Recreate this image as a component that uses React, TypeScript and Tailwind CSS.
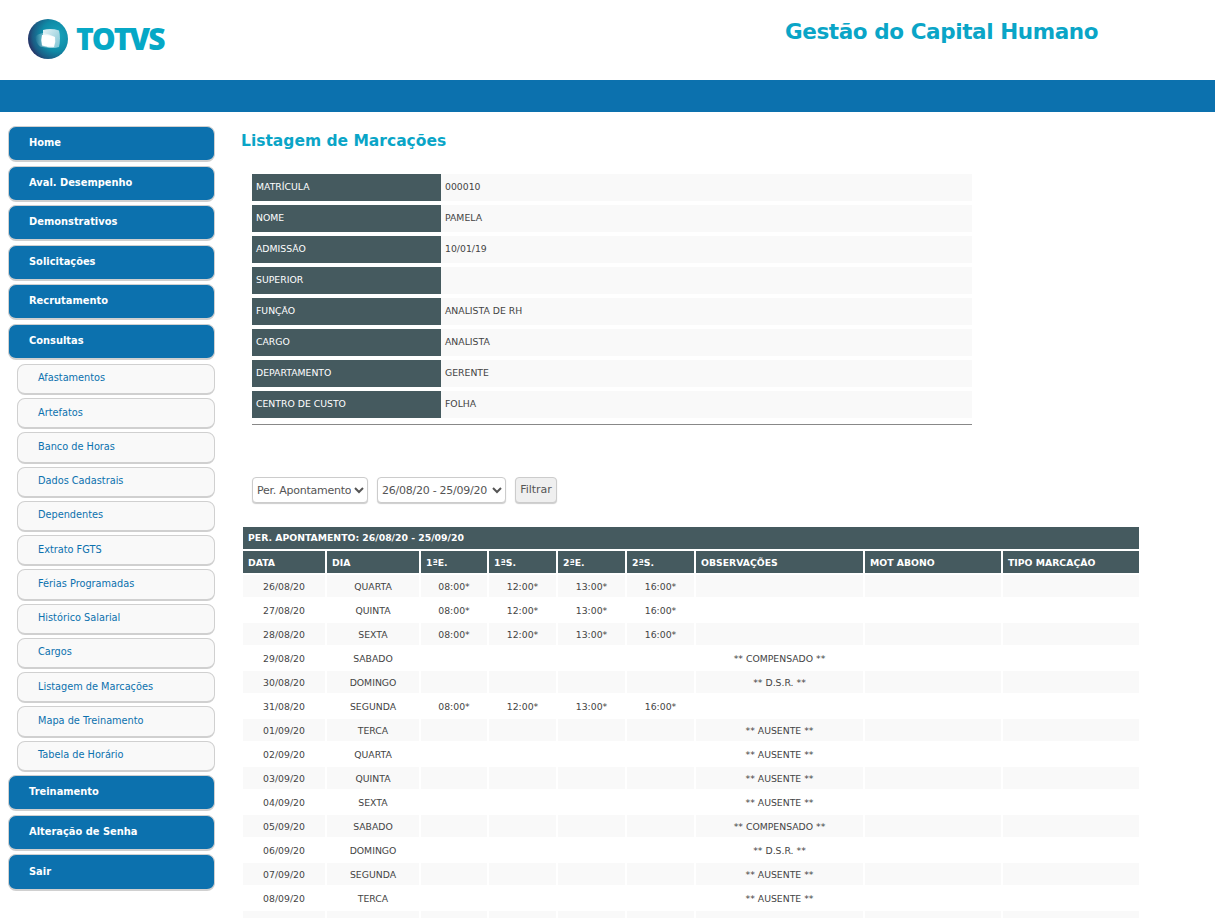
const mainMenu1 = ["Home", "Aval. Desempenho", "Demonstrativos", "Solicitações", "Recrutamento", "Consultas"];
const subMenu = ["Afastamentos", "Artefatos", "Banco de Horas", "Dados Cadastrais", "Dependentes", "Extrato FGTS", "Férias Programadas", "Histórico Salarial", "Cargos", "Listagem de Marcações", "Mapa de Treinamento", "Tabela de Horário"];
const mainMenu2 = ["Treinamento", "Alteração de Senha", "Sair"];
const info = [
  ["MATRÍCULA", "000010"],
  ["NOME", "PAMELA"],
  ["ADMISSÃO", "10/01/19"],
  ["SUPERIOR", ""],
  ["FUNÇÃO", "ANALISTA DE RH"],
  ["CARGO", "ANALISTA"],
  ["DEPARTAMENTO", "GERENTE"],
  ["CENTRO DE CUSTO", "FOLHA"],
];
const heads = ["DATA", "DIA", "1ªE.", "1ªS.", "2ªE.", "2ªS.", "OBSERVAÇÕES", "MOT ABONO", "TIPO MARCAÇÃO"];
const T = ["08:00*", "12:00*", "13:00*", "16:00*"];
const E = ["", "", "", ""];
const rows: [string, string, string[], string][] = [
  ["26/08/20", "QUARTA", T, ""],
  ["27/08/20", "QUINTA", T, ""],
  ["28/08/20", "SEXTA", T, ""],
  ["29/08/20", "SABADO", E, "** COMPENSADO **"],
  ["30/08/20", "DOMINGO", E, "** D.S.R. **"],
  ["31/08/20", "SEGUNDA", T, ""],
  ["01/09/20", "TERCA", E, "** AUSENTE **"],
  ["02/09/20", "QUARTA", E, "** AUSENTE **"],
  ["03/09/20", "QUINTA", E, "** AUSENTE **"],
  ["04/09/20", "SEXTA", E, "** AUSENTE **"],
  ["05/09/20", "SABADO", E, "** COMPENSADO **"],
  ["06/09/20", "DOMINGO", E, "** D.S.R. **"],
  ["07/09/20", "SEGUNDA", E, "** AUSENTE **"],
  ["08/09/20", "TERCA", E, "** AUSENTE **"],
  ["", "", E, ""],
];
const cols = "grid grid-cols-[82px_92px_66px_67px_67px_67px_167px_136px_136px] gap-x-[2px]";

function Logo() {
  return (
    <div className="flex items-center">
      <svg width="42" height="42" viewBox="0 0 42 42" className="shrink-0">
        <defs>
          <radialGradient id="ball" cx="0.72" cy="0.42" r="0.78">
            <stop offset="0" stopColor="#19a6bd" />
            <stop offset="0.5" stopColor="#0f8aa6" />
            <stop offset="0.78" stopColor="#1b5c84" />
            <stop offset="1" stopColor="#2b1f58" />
          </radialGradient>
          <linearGradient id="glow" x1="0" y1="0" x2="1" y2="0">
            <stop offset="0" stopColor="#ffffff" stopOpacity="0" />
            <stop offset="1" stopColor="#ffffff" stopOpacity="1" />
          </linearGradient>
          <linearGradient id="back" x1="0" y1="0" x2="1" y2="1">
            <stop offset="0" stopColor="#e4f2f6" />
            <stop offset="1" stopColor="#7cc4d4" />
          </linearGradient>
          <filter id="soft"><feGaussianBlur stdDeviation="0.4" /></filter>
        </defs>
        <circle cx="21" cy="21" r="20" fill="url(#ball)" />
        <g filter="url(#soft)">
          <path d="M16 12 Q24 10 32 12.5 Q34 20 32 29 Q26 31 20 29 L16 20Z" fill="url(#back)" />
          <path d="M8 19 Q10 16 16 15 Q22 16 28 19 Q29 24 27 29 Q20 30 13 28.5 Q9 25 8 19Z" fill="url(#glow)" />
          <path d="M15 17 Q21 16.5 27 19 Q28 24 26.5 28 Q20 29 15 27.5 Q13.5 22 15 17Z" fill="#ffffff" />
        </g>
      </svg>
      <span className="ml-[7px] text-[30px] leading-none font-extrabold tracking-[-2px] text-[#06a8c6] [font-family:'Open_Sans',sans-serif]">TOTVS</span>
    </div>
  );
}

function MainItem({ label }: { label: string }) {
  return (
    <a className={`${label === "Sair" ? "h-[37px]" : "h-[36px]"} mb-[3.6px] flex items-center pl-[20px] rounded-[8px] bg-[#0c71ae] border border-[#d0d0d0] border-b-2 text-white font-bold text-[9.9px]`}>{label}</a>
  );
}

export default function App() {
  return (
    <div className="h-screen overflow-hidden bg-white text-[#444] [font-family:'DejaVu_Sans',sans-serif] text-[9.3px]">
      <header className="h-[80px] flex">
        <div className="pl-[27px] pt-[18px] w-[785px]"><Logo /></div>
        <h1 className="pt-[17px] text-[21.5px] leading-[30px] font-bold tracking-[-0.4px] text-[#0aa5c7]">Gestão do Capital Humano</h1>
      </header>
      <div className="h-[32px] bg-[#0c71ae]" />
      <div className="flex">
        <nav className="w-[207px] ml-[8px] mt-[14px] flex flex-col shrink-0">
          {mainMenu1.map((m) => <MainItem key={m} label={m} />)}
          <div className="flex flex-col ml-[9px] mt-[0.4px]">
            {subMenu.map((s) => (
              <a key={s} className="h-[31.25px] mb-[3px] flex items-center pl-[20px] pb-[1px] rounded-[8px] bg-[#f9f9f9] border border-[#d0d0d0] border-b-2 text-[#0c71ae] text-[9.75px]">{s}</a>
            ))}
          </div>
          {mainMenu2.map((m) => <MainItem key={m} label={m} />)}
        </nav>
        <main className="ml-[26px] flex-1 min-w-0">
          <h2 className="mt-[17px] h-[24px] text-[15.5px] leading-[24px] font-bold text-[#0aa5c7]">Listagem de Marcações</h2>
          <div className="ml-[11px] w-[720px] mt-[21px] pb-[6px] border-b border-[#888] flex flex-col gap-[4px]">
            {info.map(([k, v]) => (
              <div key={k} className="flex h-[27px] bg-[#f9f9f9]">
                <div className="w-[189px] bg-[#455a5f] text-white flex items-center pl-[4px] pb-[2px]">{k}</div>
                <div className="flex items-center pl-[4px] pb-[2px]">{v}</div>
              </div>
            ))}
          </div>
          <div className="ml-[11px] mt-[52px] flex items-center h-[26px]">
            <select className="w-[116px] h-[26px] bg-white border border-[#ccc] rounded-[4px] shadow-[0_1px_1px_#ccc] text-[11px] tracking-[-0.25px] text-[#555]">
              <option>Per. Apontamento</option>
            </select>
            <select className="ml-[9px] w-[129px] h-[26px] bg-white border border-[#ccc] rounded-[4px] shadow-[0_1px_1px_#ccc] text-[11px] tracking-[-0.25px] text-[#555]">
              <option>26/08/20 - 25/09/20</option>
            </select>
            <button className="ml-[9px] w-[42px] h-[26px] bg-[#efefef] border border-[#ccc] rounded-[4px] shadow-[0_1px_1px_#ccc] text-[11px] text-[#555]">Filtrar</button>
          </div>
          <div className="ml-[2px] mt-[24px] w-[896px]">
            <div className="h-[22px] bg-[#455a5f] text-white font-bold flex items-center pl-[5px]">PER. APONTAMENTO: 26/08/20 - 25/09/20</div>
            <div className={`${cols} mt-[2px]`}>
              {heads.map((h) => (
                <div key={h} className="h-[22px] bg-[#455a5f] text-white font-bold flex items-center pl-[5px] pt-[2px]">{h}</div>
              ))}
            </div>
            <div className="mt-[2px] flex flex-col gap-y-[2px]">
              {rows.map(([d, w, ts, obs], i) => {
                const bg = i % 2 === 0 ? "bg-[#f9f9f9]" : "bg-white";
                const cell = `h-[22px] flex items-center justify-center pt-[2px] ${bg}`;
                return (
                  <div key={i} className={cols}>
                    <div className={cell}>{d}</div>
                    <div className={cell}>{w}</div>
                    {ts.map((t, j) => <div key={j} className={cell}>{t}</div>)}
                    <div className={cell}>{obs}</div>
                    <div className={cell} />
                    <div className={cell} />
                  </div>
                );
              })}
            </div>
          </div>
        </main>
      </div>
    </div>
  );
}
